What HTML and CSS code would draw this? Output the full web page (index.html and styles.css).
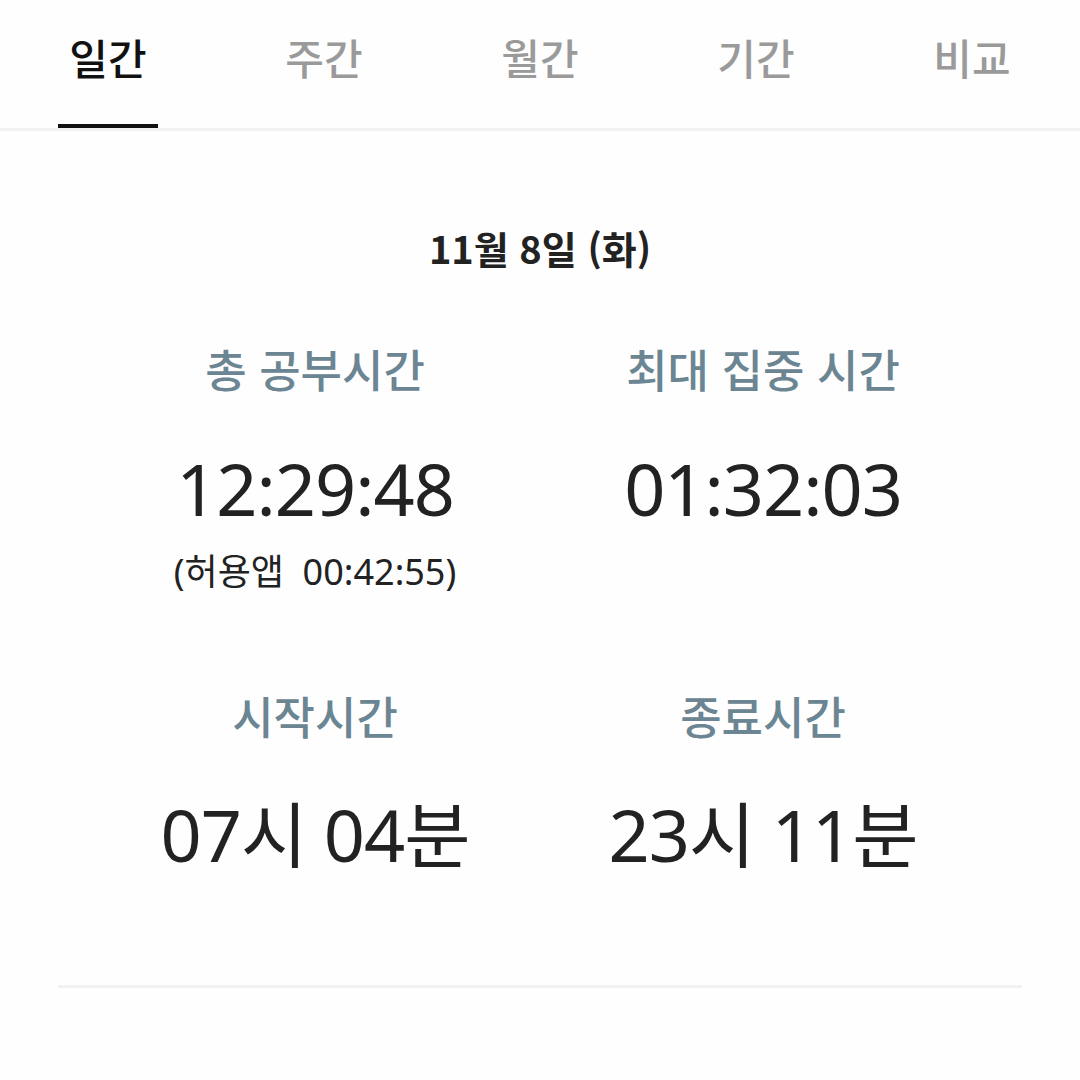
FILE: index.html
```html
<!DOCTYPE html>
<html lang="ko">
<head>
<meta charset="utf-8">
<link rel="stylesheet" href="styles.css">
</head>
<body>
<nav class="tabs">
  <div class="tab active"><span>일간</span></div>
  <div class="tab"><span>주간</span></div>
  <div class="tab"><span>월간</span></div>
  <div class="tab"><span>기간</span></div>
  <div class="tab"><span>비교</span></div>
</nav>
<main class="content">
  <h1 class="date">11월 8일 (화)</h1>
  <section class="grid">
    <div class="cell">
      <div class="label">총 공부시간</div>
      <div class="value">12:29:48</div>
      <div class="sub">(허용앱&nbsp; 00:42:55)</div>
    </div>
    <div class="cell">
      <div class="label">최대 집중 시간</div>
      <div class="value">01:32:03</div>
    </div>
    <div class="cell row2">
      <div class="label">시작시간</div>
      <div class="value big">07시 04분</div>
    </div>
    <div class="cell row2">
      <div class="label">종료시간</div>
      <div class="value big">23시 11분</div>
    </div>
  </section>
  <hr class="divider">
</main>
</body>
</html>
```
FILE: styles.css
```css
* { box-sizing: border-box; }
html, body {
  margin: 0;
  padding: 0;
  background: #fefefe;
  font-family: "Noto Sans CJK KR", "Noto Sans", sans-serif;
  color: #222;
}
.tabs {
  display: flex;
  border-bottom: 3px solid #f1f1f1;
}
.tab {
  flex: 1;
  display: flex;
  flex-direction: column;
  align-items: center;
  padding-top: 36px;
  height: 128px;
  font-size: 42px;
  line-height: 1;
  font-weight: 500;
  color: #9a9a9a;
}
.tab.active {
  color: #111;
  position: relative;
}
.tab.active::after {
  content: "";
  position: absolute;
  bottom: 0;
  left: 50%;
  width: 100px;
  margin-left: -50px;
  height: 4px;
  background: #111;
}
.content {
  padding: 0 58px;
}
.date {
  margin: 98px 0 0;
  text-align: center;
  font-size: 38px;
  line-height: 1;
  font-weight: 700;
  color: #222;
}
.grid {
  width: 896px;
  margin: 79px 0 0 33px;
  display: grid;
  grid-template-columns: 1fr 1fr;
}
.cell {
  display: flex;
  flex-direction: column;
  align-items: center;
}
.label {
  font-size: 45px;
  line-height: 1;
  font-weight: 500;
  color: #6b8593;
}
.value {
  margin-top: 61px;
  font-family: "Noto Sans", "Noto Sans CJK KR", sans-serif;
  font-size: 72px;
  line-height: 1;
  font-weight: 400;
  color: #222;
  letter-spacing: -1px;
}
.sub {
  margin-top: 30px;
  font-family: "Noto Sans", "Noto Sans CJK KR", sans-serif;
  font-size: 36px;
  line-height: 1;
  color: #222;
  letter-spacing: 0;
}
.row2 {
  margin-top: 103px;
}
.value.big {
  margin-top: 60px;
  font-size: 72px;
}
.divider {
  margin: 115px 0 0;
  border: 0;
  height: 3px;
  background: #f1f1f1;
}
```
